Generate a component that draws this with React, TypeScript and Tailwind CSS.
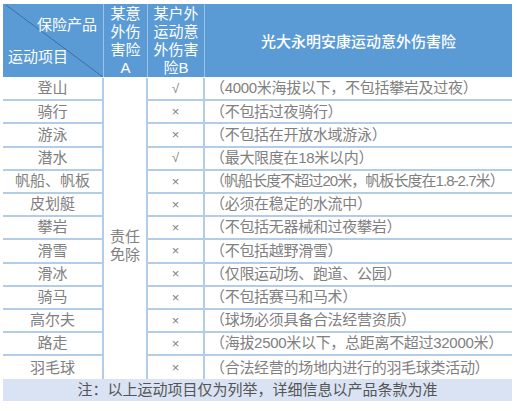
const ROWS: { sport: string; mark: string; note: string; tight?: boolean }[] = [
  { sport: "登山", mark: "√", note: "（4000米海拔以下，不包括攀岩及过夜）" },
  { sport: "骑行", mark: "×", note: "（不包括过夜骑行）" },
  { sport: "游泳", mark: "×", note: "（不包括在开放水域游泳）" },
  { sport: "潜水", mark: "√", note: "（最大限度在18米以内）" },
  { sport: "帆船、帆板", mark: "×", note: "（帆船长度不超过20米，帆板长度在1.8-2.7米）", tight: true },
  { sport: "皮划艇", mark: "×", note: "（必须在稳定的水流中）" },
  { sport: "攀岩", mark: "×", note: "（不包括无器械和过夜攀岩）" },
  { sport: "滑雪", mark: "×", note: "（不包括越野滑雪）" },
  { sport: "滑冰", mark: "×", note: "（仅限运动场、跑道、公园）" },
  { sport: "骑马", mark: "×", note: "（不包括赛马和马术）" },
  { sport: "高尔夫", mark: "×", note: "（球场必须具备合法经营资质）" },
  { sport: "路走", mark: "×", note: "（海拔2500米以下，总距离不超过32000米）" },
  { sport: "羽毛球", mark: "×", note: "（合法经营的场地内进行的羽毛球类活动）" },
];

const FONT = "font-['Liberation_Sans','Noto_Sans_CJK_SC',sans-serif]";

export default function App() {
  return (
    <div className={`h-[411px] w-[517px] bg-white pl-[3px] pt-[4px] ${FONT}`}>
      <div className="w-[509px]">
        {/* header */}
        <div className="flex h-[73px] bg-[#5b9bd5] text-[15px] leading-[18px] text-white">
          <div className="relative flex w-[101px] flex-col justify-between border-r border-[#9cc2e8] pb-[11px] pt-[12px]">
            <svg className="absolute inset-0" width="100" height="73" viewBox="0 0 100 73">
              <line x1="3" y1="1" x2="100" y2="73" stroke="#3d6f9e" strokeWidth="1" />
            </svg>
            <span className="relative self-end pr-[6px]">保险产品</span>
            <span className="relative pl-[5px]">运动项目</span>
          </div>
          <div className="flex w-[44px] items-center justify-center border-r border-[#9cc2e8] text-center">
            某意
            <br />
            外伤
            <br />
            害险
            <br />A
          </div>
          <div className="flex w-[57px] items-center justify-center border-r border-[#9cc2e8] text-center">
            某户外
            <br />
            运动意
            <br />
            外伤害
            <br />
            险B
          </div>
          <div className="flex flex-1 items-center justify-center pt-[2px] font-medium">
            光大永明安康运动意外伤害险
          </div>
        </div>

        {/* body */}
        <div className="grid grid-cols-[101px_44px_57px_307px] grid-rows-[repeat(13,23.2px)] pt-[1px] text-[15px] text-[#808080]">
          {ROWS.map((r, i) => {
            const last = i === ROWS.length - 1;
            const line = last ? "" : "border-b-2 border-[#b3cde8]";
            return [
              <div
                key={`s${i}`}
                style={{ gridRow: i + 1 }}
                className={`col-start-1 flex items-center justify-center border-r-2 border-r-[#b3cde8] ${line}`}
              >
                {r.sport}
              </div>,
              <div
                key={`m${i}`}
                style={{ gridRow: i + 1 }}
                className={`col-start-3 flex items-center justify-center border-r-2 border-r-[#b3cde8] text-[13px] ${line}`}
              >
                {r.mark}
              </div>,
              <div
                key={`n${i}`}
                style={{ gridRow: i + 1 }}
                className={`col-start-4 flex items-center whitespace-nowrap pl-[5px] ${
                  r.tight ? "tracking-[-0.95px]" : "tracking-[-0.3px]"
                } ${line}`}
              >
                {r.note}
              </div>,
            ];
          })}
          <div className="col-start-2 row-span-13 row-start-1 flex items-center justify-center border-r-2 border-[#b3cde8] pt-[34px] text-center leading-[18px]">
            责任
            <br />
            免除
          </div>
        </div>

        {/* footer */}
        <div className="flex h-[22px] items-center justify-center bg-[#dae3f3] text-[15px] text-[#555555]">
          注：以上运动项目仅为列举，详细信息以产品条款为准
        </div>
      </div>
    </div>
  );
}
